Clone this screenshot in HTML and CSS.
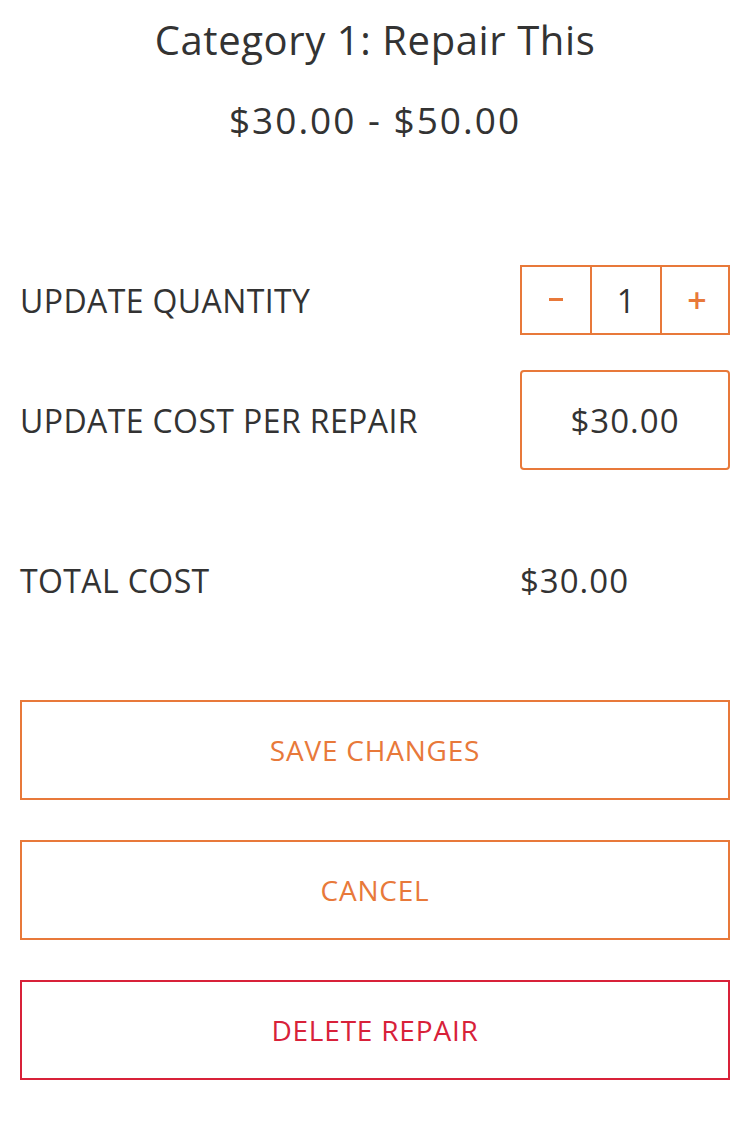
FILE: index.html
```html
<!DOCTYPE html>
<html>
<head>
<meta charset="utf-8">
<link rel="stylesheet" href="styles.css">
</head>
<body>
<div class="page">
  <header class="head">
    <h1 class="title">Category 1: Repair This</h1>
    <div class="range">$30.00 - $50.00</div>
  </header>
  <div class="rows">
    <div class="row row-qty">
      <div class="label">UPDATE QUANTITY</div>
      <div class="stepper">
        <div class="step-btn" aria-label="decrease"><span class="minus-bar"></span></div>
        <div class="step-val">1</div>
        <div class="step-btn step-plus">+</div>
      </div>
    </div>
    <div class="row row-cost">
      <div class="label">UPDATE COST PER REPAIR</div>
      <div class="cost-box">$30.00</div>
    </div>
    <div class="row row-total">
      <div class="label">TOTAL COST</div>
      <div class="total-val">$30.00</div>
    </div>
  </div>
  <div class="actions">
    <div class="btn btn-orange">SAVE CHANGES</div>
    <div class="btn btn-orange">CANCEL</div>
    <div class="btn btn-red">DELETE REPAIR</div>
  </div>
</div>
</body>
</html>
```
FILE: styles.css
```css
* { box-sizing: border-box; }
html, body { margin: 0; padding: 0; background: #fff; }
body {
  font-family: "Open Sans", "Noto Sans", sans-serif;
  color: #333333;
}
.page { padding: 0 20px; }
.head { text-align: center; }
.title {
  margin: 0;
  font-weight: 400;
  font-size: 40px;
  letter-spacing: 0.6px;
  line-height: 80px;
}
.range {
  font-size: 37px;
  letter-spacing: 2px;
  line-height: 80px;
}
.rows { margin-top: 105px; display: flex; flex-direction: column; }
.row {
  display: flex;
  align-items: center;
  justify-content: space-between;
}
.label { font-size: 32px; letter-spacing: 0.4px; }
.row-qty { height: 70px; }
.row-cost { height: 100px; margin-top: 35px; }
.row-total { height: 60px; margin-top: 80px; }
.stepper {
  width: 210px;
  height: 70px;
  display: grid;
  grid-template-columns: 68px 72px 70px;
  border: 2px solid #e8793a;
}
.step-btn, .step-val {
  display: flex;
  align-items: center;
  justify-content: center;
}
.step-val { font-size: 32px; border-left: 2px solid #e8793a; border-right: 2px solid #e8793a; }
.step-btn { color: #e8793a; }
.minus-bar {
  display: block;
  width: 14px;
  height: 3px;
  background: #e8793a;
  margin-bottom: 2px;
}
.step-plus { font-size: 34px; font-weight: 600; }
.cost-box {
  width: 210px;
  height: 100px;
  border: 2px solid #e8793a;
  border-radius: 4px;
  display: flex;
  align-items: center;
  justify-content: center;
  font-size: 33px;
  letter-spacing: 1px;
}
.total-val { width: 210px; font-size: 33px; letter-spacing: 1px; }
.actions {
  margin-top: 90px;
  display: flex;
  flex-direction: column;
  gap: 40px;
}
.btn {
  height: 100px;
  border: 2px solid #e8793a;
  display: flex;
  align-items: center;
  justify-content: center;
  font-size: 28px;
  letter-spacing: 0.8px;
  color: #e8793a;
}
.btn-red { border-color: #d82139; color: #d82139; }
```
